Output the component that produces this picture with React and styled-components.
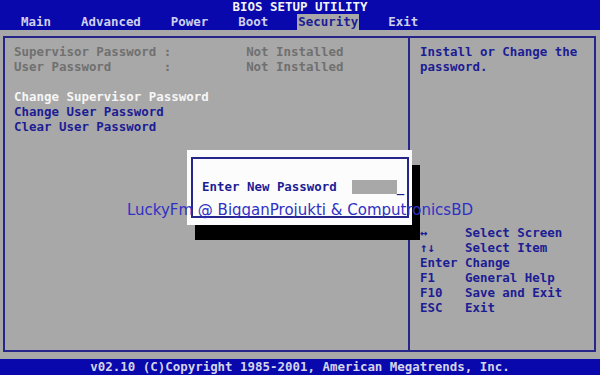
import React from "react";
import styled, { createGlobalStyle } from "styled-components";

const GlobalStyle = createGlobalStyle`
  html, body {
    margin: 0;
    padding: 0;
    background: #a8a8a8;
  }
  * {
    box-sizing: border-box;
  }
`;

const BLUE = "#0808ac";
const INK = "#1c1c94";
const FRAME = "#26268a";

const tabs = ["Main", "Advanced", "Power", "Boot", "Security", "Exit"];

const keys = [
    ["\u2194", "Select Screen"],
    ["\u2191\u2193", "Select Item"],
    ["Enter", "Change"],
    ["F1", "General Help"],
    ["F10", "Save and Exit"],
    ["ESC", "Exit"],
];

export default function App() {
    return (
        <Screen>
            <GlobalStyle />
            <Header>
                <Title>BIOS SETUP UTILITY</Title>
                <Tabs>
                    {tabs.map((t) => (
                        <Tab key={t} $active={t === "Security"}>
                            {t}
                        </Tab>
                    ))}
                </Tabs>
            </Header>

            <Body>
                <Frame>
                    <LeftPanel>
                        <Line $tone="dim">{"Supervisor Password :          Not Installed"}</Line>
                        <Line $tone="dim">{"User Password       :          Not Installed"}</Line>
                        <Line>{" "}</Line>
                        <Line $tone="selected">Change Supervisor Password</Line>
                        <Line>Change User Password</Line>
                        <Line>Clear User Password</Line>
                    </LeftPanel>
                    <RightPanel>
                        <Line>Install or Change the</Line>
                        <Line>password.</Line>
                        <KeyList>
                            {keys.map(([k, d]) => (
                                <Line key={k}>{k.padEnd(6, " ") + d}</Line>
                            ))}
                        </KeyList>
                    </RightPanel>
                </Frame>
            </Body>

            <Footer>v02.10 (C)Copyright 1985-2001, American Megatrends, Inc.</Footer>

            <Dialog>
                <DialogInner>
                    <Prompt>Enter New Password</Prompt>
                    <Field />
                    <Cursor>_</Cursor>
                </DialogInner>
            </Dialog>

            <Watermark>LuckyFm @ BigganProjukti &amp; ComputronicsBD</Watermark>
        </Screen>
    );
}

const Screen = styled.div`
  position: relative;
  width: 600px;
  height: 375px;
  overflow: hidden;
  display: flex;
  flex-direction: column;
  background: #a8a8a8;
  font-family: "DejaVu Sans Mono", "Liberation Mono", monospace;
  font-weight: bold;
  font-size: 12.45px;
  white-space: pre;
`;

const Header = styled.div`
  height: 30px;
  background: ${BLUE};
  display: flex;
  flex-direction: column;
`;

const Title = styled.div`
  height: 14px;
  line-height: 14px;
  text-align: center;
  color: #f4f4f4;
`;

const Tabs = styled.div`
  display: flex;
  gap: 30px;
  padding-left: 21px;
  height: 16px;
`;

const Tab = styled.div`
  line-height: 16px;
  padding: 0 1px;
  margin: 0 -1px;
  color: ${(p) => (p.$active ? INK : "#cfd0ec")};
  background: ${(p) => (p.$active ? "#a8a8a8" : "transparent")};
`;

const Body = styled.div`
  flex: 1;
  padding: 6px 4px 7px 3px;
`;

const Frame = styled.div`
  height: 100%;
  border: 2px solid ${FRAME};
  display: grid;
  grid-template-columns: 403px 1fr;
`;

const LeftPanel = styled.div`
  padding: 6px 0 0 9px;
`;

const RightPanel = styled.div`
  border-left: 2px solid ${FRAME};
  padding: 6px 0 0 10px;
  display: flex;
  flex-direction: column;
`;

const KeyList = styled.div`
  margin-top: 151px;
`;

const Line = styled.div`
  height: 15px;
  line-height: 15px;
  color: ${(p) =>
        p.$tone === "dim" ? "#707070" : p.$tone === "selected" ? "#f6f6f6" : INK};
`;

const Footer = styled.div`
  height: 16px;
  line-height: 16px;
  background: ${BLUE};
  color: #d4d4ea;
  text-align: center;
`;

const Dialog = styled.div`
  position: absolute;
  left: 187px;
  top: 150px;
  width: 225px;
  height: 75px;
  background: #fcfcfc;
  padding: 7px 3px 7px 4px;
  box-shadow: 8px 15px 0 #000;
`;

const DialogInner = styled.div`
  height: 100%;
  border: 2px solid ${FRAME};
  display: flex;
  align-items: center;
  padding: 0 0 2px 9px;
`;

const Prompt = styled.span`
  color: ${INK};
  line-height: 15px;
`;

const Field = styled.span`
  width: 45px;
  height: 14px;
  margin-left: 15px;
  background: #a8a8a8;
`;

const Cursor = styled.span`
  color: ${INK};
  line-height: 15px;
  margin-top: 2px;
`;

const Watermark = styled.div`
  position: absolute;
  left: 0;
  right: 0;
  top: 200px;
  text-align: center;
  font-family: "DejaVu Sans", Verdana, sans-serif;
  font-weight: normal;
  font-size: 15px;
  line-height: 20px;
  color: #3030c4;
`;
